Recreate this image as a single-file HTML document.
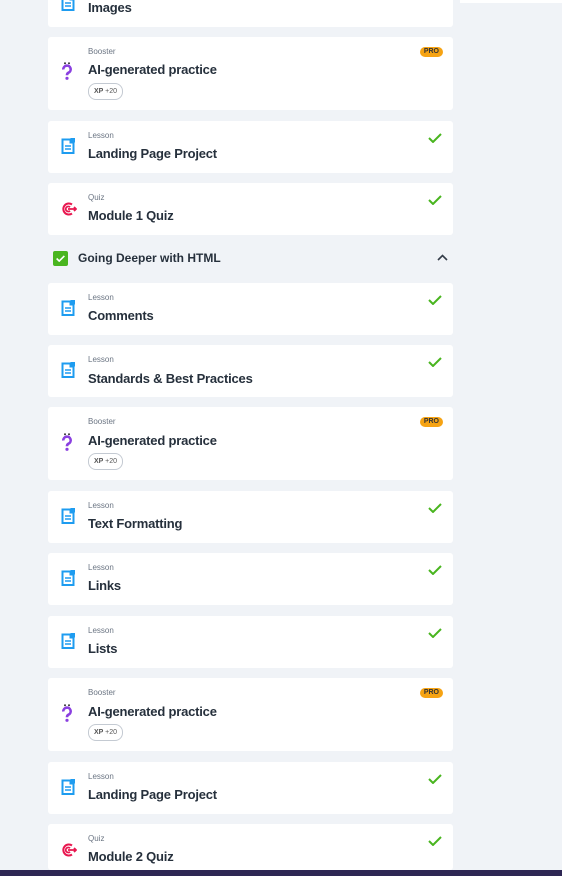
<!DOCTYPE html>
<html><head><meta charset="utf-8"><style>
*{margin:0;padding:0;box-sizing:border-box}
html{width:562px;height:876px;overflow:hidden}
body{width:562px;height:876px;background:#f0f3f7;font-family:"Liberation Sans",sans-serif;position:relative;overflow:hidden;color:#2b3440}
.c{position:absolute;left:48px;width:405px;background:#fff;border-radius:3px}
.l{position:absolute;left:40px;font-size:8px;color:#6b7583}
.t{position:absolute;left:40px;font-size:13px;font-weight:bold;color:#26303c;letter-spacing:-0.2px}
.i{position:absolute;left:13px}
.ck{position:absolute;right:11px}
.pro{position:absolute;right:10px;top:10px;background:#f6a313;border-radius:5px;font-size:7px;font-weight:bold;color:#333;padding:1px 4px;line-height:8px}
.xp{position:absolute;left:40px;top:46px;height:17px;border:1px solid #c4cad2;border-radius:8px;font-size:7px;font-weight:bold;color:#555;padding:3px 5px;line-height:9px}
.bar{position:absolute;left:0;top:870px;width:562px;height:6px;background:#2e2754}
</style></head><body>
<svg width="0" height="0" style="position:absolute"><defs>
<symbol id="doc" viewBox="0 0 14 16"><path d="M1.5 1.5h8v3h3V15h-11z" fill="#fff" stroke="#1e9cf0" stroke-width="2"/><rect x="9.5" y="0" width="4.5" height="4.5" fill="#1e9cf0"/><path d="M4 8h6M4 11h6" stroke="#1e9cf0" stroke-width="1.6"/></symbol>
<symbol id="quiz" viewBox="0 0 16 16"><path d="M11 3.5A5.5 5.5 0 1 0 11 12.5" fill="none" stroke="#e8174f" stroke-width="2"/><path d="M9 6.2A2.5 2.5 0 1 0 9 9.8" fill="none" stroke="#e8174f" stroke-width="1.8"/><path d="M7 8h8M13 6l2 2-2 2" stroke="#e8174f" stroke-width="1.8" fill="none"/></symbol>
<symbol id="q" viewBox="0 0 12 18"><path d="M2.3 7.5a3.7 3.7 0 1 1 5.2 3.2c-1.3.7-1.5 1.2-1.5 2.5" fill="none" stroke="#8a3fe0" stroke-width="2.6"/><circle cx="6" cy="16.3" r="1.6" fill="#8a3fe0"/><circle cx="4" cy="1.3" r="1" fill="#333"/><circle cx="8" cy="1.3" r="1" fill="#333"/></symbol>
<symbol id="chk" viewBox="0 0 14 10"><path d="M1 5l4 4 8-8" fill="none" stroke="#49b51f" stroke-width="2"/></symbol>
</defs></svg>

<div style="position:absolute;left:460px;top:0;width:102px;height:3px;background:#fff"></div>

<div class="c" style="top:-20px;height:47px"><svg class="i" style="top:15px" width="14" height="16"><use href="#doc"/></svg><div class="t" style="top:20px">Images</div></div>

<div class="c" style="top:37px;height:73px"><div class="l" style="top:10px">Booster</div><div class="pro">PRO</div><svg class="i" style="top:25px;left:13px" width="12" height="18"><use href="#q"/></svg><div class="t" style="top:25px">AI-generated practice</div><div class="xp">XP <span style="font-weight:normal">+20</span></div></div>

<div class="c" style="top:121px;height:52px"><div class="l" style="top:10px">Lesson</div><svg class="ck" style="top:12px" width="14" height="10"><use href="#chk"/></svg><svg class="i" style="top:17px" width="14" height="16"><use href="#doc"/></svg><div class="t" style="top:25px">Landing Page Project</div></div>

<div class="c" style="top:183px;height:52px"><div class="l" style="top:10px">Quiz</div><svg class="ck" style="top:12px" width="14" height="10"><use href="#chk"/></svg><svg class="i" style="top:18px" width="16" height="16"><use href="#quiz"/></svg><div class="t" style="top:25px">Module 1 Quiz</div></div>

<div style="position:absolute;left:53px;top:251px;width:15px;height:15px;background:#49b51f;border-radius:2px"><svg style="position:absolute;left:3px;top:4px" width="9" height="7" viewBox="0 0 14 10"><path d="M1 5l4 4 8-8" fill="none" stroke="#fff" stroke-width="2.5"/></svg></div>
<div style="position:absolute;left:78px;top:251px;font-size:12px;font-weight:bold;color:#26303c">Going Deeper with HTML</div>
<svg style="position:absolute;left:437px;top:254px" width="11" height="7" viewBox="0 0 11 7"><path d="M1 6l4.5-4.5L10 6" fill="none" stroke="#333c48" stroke-width="1.6"/></svg>

<div class="c" style="top:283px;height:52px"><div class="l" style="top:10px">Lesson</div><svg class="ck" style="top:12px" width="14" height="10"><use href="#chk"/></svg><svg class="i" style="top:17px" width="14" height="16"><use href="#doc"/></svg><div class="t" style="top:25px">Comments</div></div>

<div class="c" style="top:345px;height:52px"><div class="l" style="top:10px">Lesson</div><svg class="ck" style="top:12px" width="14" height="10"><use href="#chk"/></svg><svg class="i" style="top:17px" width="14" height="16"><use href="#doc"/></svg><div class="t" style="top:26px">Standards &amp; Best Practices</div></div>

<div class="c" style="top:407px;height:73px"><div class="l" style="top:10px">Booster</div><div class="pro">PRO</div><svg class="i" style="top:26px;left:13px" width="12" height="18"><use href="#q"/></svg><div class="t" style="top:26px">AI-generated practice</div><div class="xp">XP <span style="font-weight:normal">+20</span></div></div>

<div class="c" style="top:491px;height:52px"><div class="l" style="top:10px">Lesson</div><svg class="ck" style="top:12px" width="14" height="10"><use href="#chk"/></svg><svg class="i" style="top:17px" width="14" height="16"><use href="#doc"/></svg><div class="t" style="top:25px">Text Formatting</div></div>

<div class="c" style="top:553px;height:52px"><div class="l" style="top:10px">Lesson</div><svg class="ck" style="top:12px" width="14" height="10"><use href="#chk"/></svg><svg class="i" style="top:17px" width="14" height="16"><use href="#doc"/></svg><div class="t" style="top:25px">Links</div></div>

<div class="c" style="top:616px;height:52px"><div class="l" style="top:10px">Lesson</div><svg class="ck" style="top:12px" width="14" height="10"><use href="#chk"/></svg><svg class="i" style="top:17px" width="14" height="16"><use href="#doc"/></svg><div class="t" style="top:25px">Lists</div></div>

<div class="c" style="top:678px;height:73px"><div class="l" style="top:10px">Booster</div><div class="pro">PRO</div><svg class="i" style="top:26px;left:13px" width="12" height="18"><use href="#q"/></svg><div class="t" style="top:26px">AI-generated practice</div><div class="xp">XP <span style="font-weight:normal">+20</span></div></div>

<div class="c" style="top:762px;height:52px"><div class="l" style="top:10px">Lesson</div><svg class="ck" style="top:12px" width="14" height="10"><use href="#chk"/></svg><svg class="i" style="top:17px" width="14" height="16"><use href="#doc"/></svg><div class="t" style="top:25px">Landing Page Project</div></div>

<div class="c" style="top:824px;height:46px"><div class="l" style="top:10px">Quiz</div><svg class="ck" style="top:12px" width="14" height="10"><use href="#chk"/></svg><svg class="i" style="top:18px" width="16" height="16"><use href="#quiz"/></svg><div class="t" style="top:25px">Module 2 Quiz</div></div>

<div class="bar"></div>
</body></html>
